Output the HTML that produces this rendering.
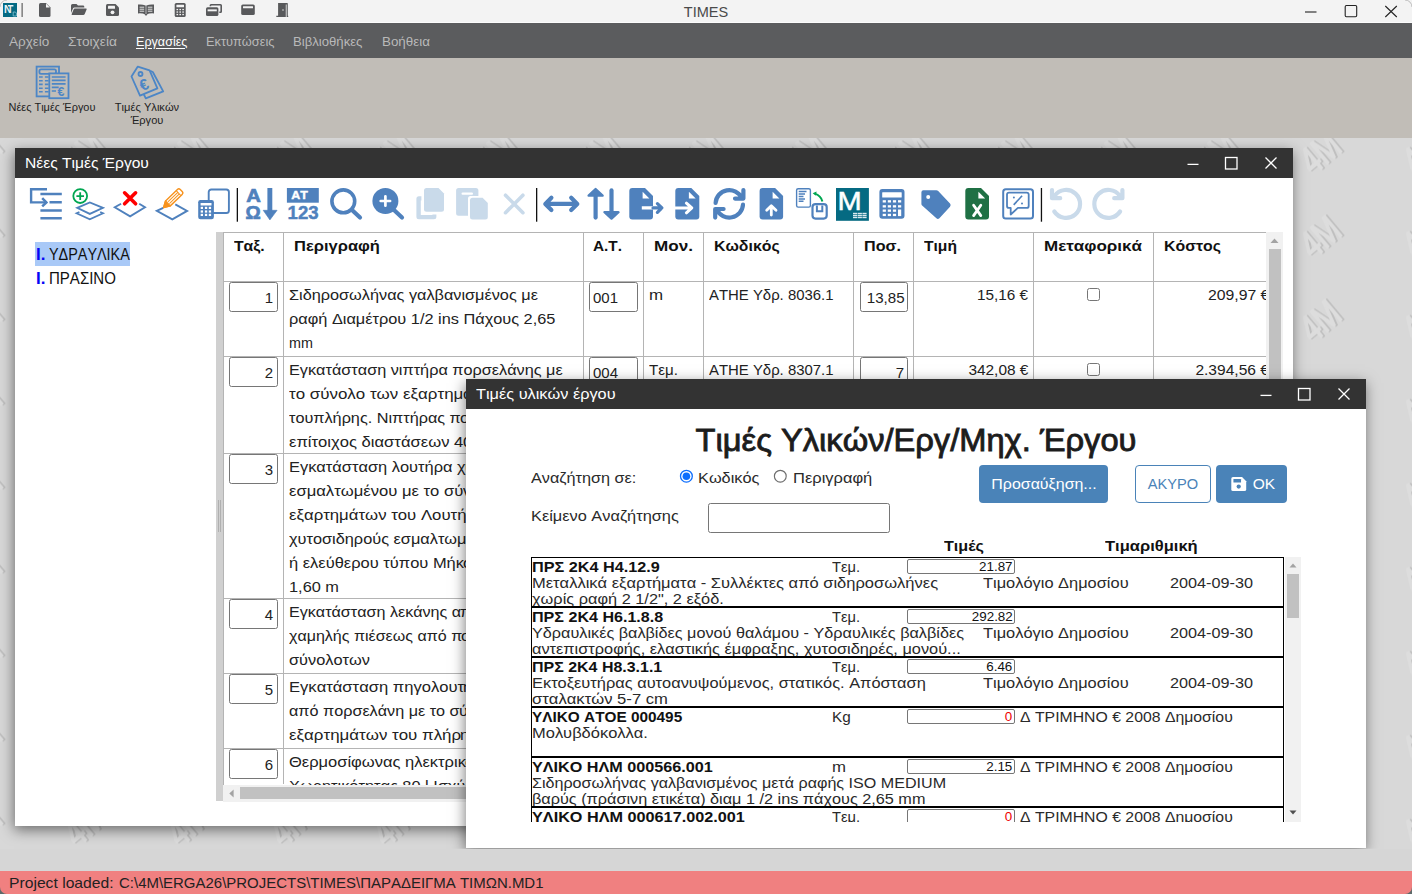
<!DOCTYPE html>
<html lang="el"><head><meta charset="utf-8"><title>TIMES</title>
<style>
html,body{margin:0;padding:0}
body{width:1412px;height:894px;overflow:hidden;position:relative;background:#d9d9d9;font-family:"Liberation Sans",sans-serif;font-kerning:none;color:#000}
.layer{position:absolute;left:0;top:0;width:1412px;height:894px;overflow:hidden}
.a{position:absolute;box-sizing:border-box}
.t{position:absolute;white-space:nowrap;font-kerning:none}
svg{position:absolute;overflow:visible}
</style></head><body>
<div class="layer" id="Lbase">
<div class="a" style="left:0px;top:0px;width:1412px;height:23px;background:#f3f3f3;"></div>
<div class="a" style="left:0px;top:22px;width:1412px;height:1px;background:#fbfbfb;"></div>
<div class="a" style="left:0px;top:23px;width:1412px;height:35px;background:#5b5c5e;"></div>
<div class="a" style="left:0px;top:58px;width:1412px;height:80px;background:#c1bdb7;"></div>
<svg style="left:0;top:138px" width="1412" height="711" viewBox="0 0 1412 711">
<defs><pattern id="wm" x="32" y="-27.6" width="103" height="84" patternUnits="userSpaceOnUse">
<g transform="translate(51.5,42) rotate(-40) scale(0.76,1)" font-family="Liberation Sans, sans-serif" font-size="38" font-weight="400" text-anchor="middle" stroke-linejoin="round">
<text x="2.2" y="14.8" fill="#bfbfbf" stroke="#bfbfbf" stroke-width="1.6">4M</text><text x="0" y="13.6" fill="#dddddd" stroke="#dddddd" stroke-width="1.6">4M</text></g>
</pattern></defs>
<rect width="1412" height="711" fill="#d8d8d8"/><rect width="1412" height="711" fill="url(#wm)"/></svg>
<div class="a" style="left:0px;top:848.8px;width:1412px;height:22.2px;background:#d6d6d6;"></div>
<div class="a" style="left:0px;top:871px;width:1412px;height:23px;background:#f08080;"></div>
<div class="t" id="t0" style="top:874.30px;font-size:15px;line-height:18px;color:#222;left:9.30px;transform:scaleX(1.0452);transform-origin:0 0;">Project loaded:</div>
<div class="t" id="t1" style="top:874.30px;font-size:15px;line-height:18px;color:#222;left:118.80px;transform:scaleX(0.9979);transform-origin:0 0;">C:\4M\ERGA26\PROJECTS\TIMES\ΠΑΡΑΔΕΙΓΜΑ ΤΙΜΩΝ.MD1</div>
<div class="t" id="t2" style="top:2.60px;font-size:15px;line-height:18px;color:#4a4a4a;left:406.00px;width:600px;text-align:center;transform:scaleX(0.9685);transform-origin:50% 0;">TIMES</div>
<div class="t" id="t3" style="top:33.50px;font-size:13px;line-height:16px;color:#b9b9b9;left:8.90px;transform:scaleX(1.0409);transform-origin:0 0;">Αρχείο</div>
<div class="t" id="t4" style="top:33.50px;font-size:13px;line-height:16px;color:#b9b9b9;left:67.90px;transform:scaleX(1.0559);transform-origin:0 0;">Στοιχεία</div>
<div class="t" id="t5" style="top:33.50px;font-size:13px;line-height:16px;color:#fff;left:136.00px;transform:scaleX(0.9687);transform-origin:0 0;text-decoration:underline;text-underline-offset:1.5px;">Εργασίες</div>
<div class="t" id="t6" style="top:33.50px;font-size:13px;line-height:16px;color:#b9b9b9;left:206.10px;transform:scaleX(0.9840);transform-origin:0 0;">Εκτυπώσεις</div>
<div class="t" id="t7" style="top:33.50px;font-size:13px;line-height:16px;color:#b9b9b9;left:293.40px;transform:scaleX(1.0104);transform-origin:0 0;">Βιβλιοθήκες</div>
<div class="t" id="t8" style="top:33.50px;font-size:13px;line-height:16px;color:#b9b9b9;left:381.90px;transform:scaleX(1.0287);transform-origin:0 0;">Βοήθεια</div>
<div class="t" id="t9" style="top:100.69px;font-size:11px;line-height:13px;color:#222;left:-247.80px;width:600px;text-align:center;transform:scaleX(0.9944);transform-origin:50% 0;">Νέες Τιμές Έργου</div>
<div class="t" id="t10" style="top:100.69px;font-size:11px;line-height:13px;color:#222;left:-152.80px;width:600px;text-align:center;transform:scaleX(1.0119);transform-origin:50% 0;">Τιμές Υλικών</div>
<div class="t" id="t11" style="top:114.29px;font-size:11px;line-height:13px;color:#222;left:-152.70px;width:600px;text-align:center;transform:scaleX(1.0052);transform-origin:50% 0;">Έργου</div>
<svg style="left:0;top:0" width="1412" height="894" viewBox="0 0 1412 894"><rect x="3" y="3" width="14" height="14" fill="#046a83"/><text x="4" y="12.6" font-family="Liberation Sans, sans-serif" font-size="10.5" font-weight="700" fill="#e8f4f7">N</text><rect x="8" y="5" width="5.4" height="1.5" fill="#e8f4f7"/><path d="M13.2 12 h2.2 l1 1 v3 h-3.2 z" fill="none" stroke="#9fd0dc" stroke-width="0.7"/><rect x="21.6" y="3" width="1" height="14" fill="#444"/><path d="M40.5 3 H46 L50.5 7.5 V15.5 Q50.5 17 49 17 H40.5 Q39 17 39 15.5 V4.5 Q39 3 40.5 3 Z" fill="#58595b"/><path d="M46 3.6 V7.5 H49.9 Z" fill="#f3f3f3"/><path d="M72.5 4 H76.5 L78 5.5 H83 Q84.3 5.5 84.3 6.8 V7.6 H74.5 Q73.4 7.6 73 8.6 L71 13 V5.5 Q71 4 72.5 4 Z" fill="#58595b"/><path d="M74.8 8.6 H86 Q87 8.6 86.6 9.6 L84.6 14.2 Q84.2 15 83.2 15 H72.2 Q71.3 15 71.7 14.1 L73.6 9.4 Q74 8.6 74.8 8.6 Z" fill="#58595b"/><path d="M107.5 4 H115.5 L119 7.5 V14.5 Q119 16 117.5 16 H107.5 Q106 16 106 14.5 V5.5 Q106 4 107.5 4 Z" fill="#58595b"/><rect x="108" y="5.8" width="7" height="3" fill="#f3f3f3" rx="0.4"/><circle cx="112.5" cy="12.3" r="1.9" fill="#f3f3f3"/><path d="M138 4.6 Q142 4 145.7 5.6 V14.4 Q142 13 138 13.4 Z M154 4.6 Q150 4 146.3 5.6 V14.4 Q150 13 154 13.4 Z" fill="#58595b"/><path d="M144.5 14 L146 16 L147.5 14 Z" fill="#58595b"/><g stroke="#f3f3f3" stroke-width="0.9"><path d="M139.6 7.2 H144.2 M139.6 9.2 H144.2 M139.6 11.2 H144.2 M147.8 7.2 H152.4 M147.8 9.2 H152.4 M147.8 11.2 H152.4"/></g><rect x="174.7" y="3" width="11" height="14" rx="1.6" fill="#58595b"/><rect x="176.4" y="4.7" width="7.6" height="2.6" fill="#f3f3f3" rx="0.4"/><rect x="176.5" y="8.9" width="1.6" height="1.3" fill="#f3f3f3"/><rect x="179.4" y="8.9" width="1.6" height="1.3" fill="#f3f3f3"/><rect x="182.3" y="8.9" width="1.6" height="1.3" fill="#f3f3f3"/><rect x="176.5" y="11.4" width="1.6" height="1.3" fill="#f3f3f3"/><rect x="179.4" y="11.4" width="1.6" height="1.3" fill="#f3f3f3"/><rect x="182.3" y="11.4" width="1.6" height="1.3" fill="#f3f3f3"/><rect x="176.5" y="13.9" width="1.6" height="1.3" fill="#f3f3f3"/><rect x="179.4" y="13.9" width="1.6" height="1.3" fill="#f3f3f3"/><rect x="182.3" y="13.9" width="1.6" height="1.3" fill="#f3f3f3"/><path d="M211 4 H220.5 Q222 4 222 5.5 V11.5 Q222 13 220.5 13 H219.3 V11.5 H220.4 V5.6 H211.2 V6.2 H209.6 V5.5 Q209.6 4 211 4 Z" fill="#58595b"/><rect x="206" y="7.2" width="12.4" height="8.8" rx="1.5" fill="#58595b"/><rect x="207.6" y="9.4" width="9.2" height="1.9" fill="#f3f3f3"/><rect x="241.2" y="4.5" width="13.6" height="10.5" rx="1.6" fill="#58595b"/><rect x="243" y="6.3" width="10" height="2" fill="#f3f3f3" rx="0.3"/><path d="M278.3 3 H284.6 V15.8 H276.3 V17 H285.8 V4.4 H286.6 V17 H288.2 V15.8 H287.8 V3.6 Q287.8 3 287.2 3 H285.2 Z M278.3 3 V15.8 H284.6 V3 Z" fill="#58595b"/><rect x="278.3" y="3" width="6.5" height="13" fill="#58595b"/><circle cx="283" cy="10" r="0.7" fill="#f3f3f3"/><g stroke="#222" stroke-width="1.1" fill="none"><path d="M1305 12 H1316.5"/><rect x="1345.2" y="5.5" width="11.5" height="11.2" rx="1.2"/><path d="M1385.3 6 L1396.8 17 M1396.8 6 L1385.3 17"/></g><path d="M1412 887 V894 H1405 A7 7 0 0 0 1412 887 Z" fill="#5d6a6a"/><path d="M0 887 V894 H7 A7 7 0 0 1 0 887 Z" fill="#5d6a6a"/><path d="M0 7 A7 7 0 0 1 7 0" fill="none" stroke="#bdbdbd" stroke-width="1"/><path d="M1412 7 A7 7 0 0 0 1405 0" fill="none" stroke="#bdbdbd" stroke-width="1"/></svg>
<svg style="left:0;top:0" width="1412" height="894" viewBox="0 0 1412 894"><g fill="none" stroke="#4c86c6" stroke-width="1.8"><rect x="36.6" y="66.6" width="22.4" height="29.8"/><rect x="39.4" y="69.4" width="16.6" height="4.4" rx="1.6"/><path d="M39 77 H42.7 M44.9 77 H48.6 M39 80.7 H42.7 M44.9 80.7 H48.6 M39 84.4 H42.7 M44.9 84.4 H48.6 M39 88.2 H42.7 M44.9 88.2 H48.6 M39 91.7 H42.7 M44.9 91.7 H48.6 " stroke-width="1.6"/><rect x="49.3" y="73.4" width="19.2" height="24.8" fill="#c1bdb7"/><path d="M51.8 77 H65.6 M51.8 80.4 H65.6 M51.8 83.9 H65.6 M51.8 87.4 H58.7 M51.8 91 H56" stroke-width="1.6"/></g><text x="57.6" y="96" font-family="Liberation Sans, sans-serif" font-size="12.5" font-weight="700" fill="#4c86c6">€</text><g fill="none" stroke="#4c86c6" stroke-width="1.8" stroke-linejoin="round"><path d="M150.2 70.9 L152.8 72 L163.2 91.4 L145.8 98.4 L143.6 94"/><path d="M137.8 66.6 L131.5 76.5 L140 95.6 L157.4 88.4 L149.6 70.4 Z" fill="#c1bdb7"/><circle cx="140.5" cy="74" r="2"/></g><text x="0" y="0" transform="translate(142.2,91.2) rotate(-24)" font-family="Liberation Sans, sans-serif" font-size="15.5" font-weight="700" fill="#4c86c6">€</text></svg>
</div>
<div class="layer" id="Lw1" style="clip-path:inset(138px 0 45.2px 0)">
<div class="a" style="left:15px;top:148px;width:1278px;height:678px;background:#fff;box-shadow:-1px 4px 13px rgba(0,0,0,0.5);"></div>
<div class="a" style="left:15px;top:148px;width:1278px;height:30px;background:#333;"></div>
<div class="t" id="t12" style="top:153.80px;font-size:15px;line-height:18px;color:#fff;left:24.80px;transform:scaleX(1.0397);transform-origin:0 0;">Νέες Τιμές Έργου</div>
<svg style="left:0;top:0" width="1412" height="894" viewBox="0 0 1412 894"><g stroke="#fff" stroke-width="1.3" fill="none"><path d="M1187.5 164.4 H1198.5"/><rect x="1225.5" y="157.5" width="11.5" height="11.5"/><path d="M1265.5 157.5 L1276.5 168.5 M1276.5 157.5 L1265.5 168.5"/></g></svg>
<svg style="left:0;top:0" width="1412" height="894" viewBox="0 0 1412 894"><rect x="236.70000000000002" y="188" width="1.3" height="33.7" fill="#111"/><rect x="536.0" y="188" width="1.3" height="33.7" fill="#111"/><rect x="1040.8000000000002" y="188" width="1.3" height="33.7" fill="#111"/><g transform="translate(30,188)" fill="none" stroke="#4f81bd"><path d="M17 1.2 H1.1 V14.4 H16" stroke-width="2.4"/><path d="M12.2 10.2 L16.4 14.4 L12.2 18.4" stroke-width="2.5"/><path d="M10.4 6 H31.8 M19.5 14.3 H31.8 M10.4 22.5 H31.8 M10.4 30.3 H31.8" stroke-width="2.6"/></g><g transform="translate(72,188)" fill="none"><path d="M5.2 19.9 L17.8 14.5 L31 19.9 L17.8 25.9 Z M7.4 24 L4.6 25.3 L17.8 31.3 L31 25.3 L28.2 24" stroke="#4f81bd" stroke-width="1.8" stroke-linejoin="miter"/><circle cx="8.2" cy="8.1" r="6.9" fill="#fff" stroke="#00a651" stroke-width="1.8"/><path d="M4.4 8.1 H12 M8.2 4.3 V11.9" stroke="#00a651" stroke-width="1.8"/></g><g transform="translate(114,188)" fill="none"><path d="M7.1 15.7 L0.8 19.3 L16.1 28.3 L31 19.3 L25.2 15.7" stroke="#4f81bd" stroke-width="1.9"/><path d="M10.6 4.8 L21.6 15.8 M21.6 4.8 L10.6 15.8" stroke="#ff0000" stroke-width="3.6" stroke-linecap="round"/></g><g transform="translate(156,188)" fill="none"><path d="M7.2 19.9 L0.8 22.9 L16.3 31.3 L31.1 22.9 L19.3 16.3" stroke="#4f81bd" stroke-width="1.9"/><g transform="translate(7.6,19.6) rotate(-44)" stroke="#f7931e" stroke-width="1.4" stroke-linejoin="round"><path d="M0 0 L6 -3.4 H22.5 Q24.5 -3.4 24.5 -1.4 V1.4 Q24.5 3.4 22.5 3.4 H6 Z" fill="#fff"/><path d="M0 0 L6 -3.4 V3.4 Z" fill="#f7931e"/><path d="M7 -1.1 H20.5 M7 1.1 H20.5 M20.8 -3.4 V3.4" stroke-width="1"/></g></g><g transform="translate(198,188)"><rect x="10.7" y="1.5" width="20.2" height="23.5" rx="2.6" fill="none" stroke="#4f81bd" stroke-width="1.9"/><rect x="0.2" y="12.1" width="15.7" height="19.2" rx="2.2" fill="#4f81bd"/><rect x="2.6" y="15" width="10.9" height="2.6" fill="#fff" rx="0.4"/><rect x="2.7" y="18.8" width="2.3" height="2.2" fill="#fff"/><rect x="6.9" y="18.8" width="2.3" height="2.2" fill="#fff"/><rect x="10.8" y="18.8" width="2.3" height="2.2" fill="#fff"/><rect x="2.7" y="22.4" width="2.3" height="2.2" fill="#fff"/><rect x="6.9" y="22.4" width="2.3" height="2.2" fill="#fff"/><rect x="10.8" y="22.4" width="2.3" height="2.2" fill="#fff"/><rect x="2.7" y="25.8" width="2.3" height="2.2" fill="#fff"/><rect x="6.9" y="25.8" width="2.3" height="2.2" fill="#fff"/><rect x="10.8" y="25.8" width="2.3" height="2.2" fill="#fff"/></g><g transform="translate(244,188)" fill="#4f81bd"><text x="2.2" y="13.7" font-family="Liberation Sans, sans-serif" font-size="18.6" font-weight="700" stroke="#4f81bd" stroke-width="0.7" textLength="14.6" lengthAdjust="spacingAndGlyphs">A</text><text x="1.4" y="31.1" font-family="Liberation Sans, sans-serif" font-size="18.4" font-weight="700" stroke="#4f81bd" stroke-width="0.7" textLength="15.2" lengthAdjust="spacingAndGlyphs">Ω</text><rect x="23.4" y="0" width="4.9" height="23.5"/><path d="M19.2 22.3 H33.1 L25.9 31.9 Z" stroke="#4f81bd" stroke-width="0.6" stroke-linejoin="round"/></g><g transform="translate(286,188)"><rect x="0.9" y="0" width="31.9" height="14.7" fill="#4f81bd"/><text x="5.3" y="10.9" font-family="Liberation Sans, sans-serif" font-size="11.8" font-weight="700" fill="#fff" stroke="#fff" stroke-width="0.4" textLength="16.6" lengthAdjust="spacingAndGlyphs">AT</text><text x="1.6" y="31.1" font-family="Liberation Sans, sans-serif" font-size="18.6" font-weight="700" fill="#4f81bd" stroke="#4f81bd" stroke-width="0.45" textLength="31" lengthAdjust="spacingAndGlyphs">123</text></g><g transform="translate(328,188)" fill="none" stroke="#4f81bd" stroke-linecap="round"><circle cx="15.3" cy="13.3" r="11.4" stroke-width="3.6"/><path d="M24 22 L32 29.6" stroke-width="4.2"/></g><g transform="translate(370,188)" stroke-linecap="round"><circle cx="15.4" cy="13" r="13" fill="#4f81bd"/><path d="M24 22 L32 29.6" stroke="#4f81bd" stroke-width="4.2"/><path d="M10.7 13 H20.1 M15.4 8.3 V17.7" stroke="#fff" stroke-width="2.7"/></g><g transform="translate(412,188)" fill="#c9daea"><path d="M14.5 0 H26.5 L32 5.5 V21.3 Q32 23.8 29.5 23.8 H14.5 Q12 23.8 12 21.3 V2.5 Q12 0 14.5 0 Z"/><path d="M6.9 8.3 H9.4 V12.4 H8.8 V27 H20.4 V26.4 H24.4 V28.8 Q24.4 31.3 21.9 31.3 H6.9 Q4.4 31.3 4.4 28.8 V10.8 Q4.4 8.3 6.9 8.3 Z"/></g><g transform="translate(454,188)" fill="#c9daea"><path d="M4.6 0 H21.9 Q24.4 0 24.4 2.5 V8 H16.5 Q14 8 14 10.5 V27.7 H4.6 Q2.1 27.7 2.1 25.2 V2.5 Q2.1 0 4.6 0 Z"/><rect x="7.5" y="4.6" width="11.5" height="2.2" rx="1.1" fill="#fff"/><path d="M18.5 9.8 H28.6 L33.8 15 V29 Q33.8 31.5 31.3 31.5 H18.5 Q16 31.5 16 29 V12.3 Q16 9.8 18.5 9.8 Z"/></g><path d="M505.5 195.2 L522.9 212.7 M522.9 195.2 L505.5 212.7" stroke="#c9daea" stroke-width="3.6" stroke-linecap="round" fill="none"/><g fill="none" stroke="#4f81bd" stroke-width="4.2" stroke-linecap="round" stroke-linejoin="round"><path d="M545.5 203.9 H577.1 M551.4 197.8 L545.3 203.9 L551.4 210 M571.2 197.8 L577.3 203.9 L571.2 210"/></g><g fill="#4f81bd" stroke="#4f81bd" stroke-linejoin="round" stroke-linecap="round"><path d="M595.6 196 V217.6" stroke-width="4.2" fill="none"/><path d="M588.6 195.6 L595.6 189 L602.6 195.6 Z" stroke-width="2.4"/><path d="M611.5 190.4 V212" stroke-width="4.2" fill="none"/><path d="M604.5 212.2 L611.5 218.6 L618.5 212.2 Z" stroke-width="2.4"/></g><path d="M632.3 188 H645 L653 196 V216.6 Q653 219.6 650 219.6 H632.3 Q629.3 219.6 629.3 216.6 V191 Q629.3 188 632.3 188 Z" fill="#4f81bd"/><path d="M642.6 191.8 V198.4 H649.4 Z" fill="#fff"/><path d="M641.8 207.9 H653" stroke="#fff" stroke-width="3.2" fill="none"/><path d="M653 207.9 H661.6 M657.4 203.6 L661.9 207.9 L657.4 212.4" stroke="#4f81bd" stroke-width="3.2" fill="none" stroke-linecap="round" stroke-linejoin="round"/><path d="M678.3 188 H691.3 L699.3 196 V216.6 Q699.3 219.6 696.3 219.6 H678.3 Q675.3 219.6 675.3 216.6 V191 Q675.3 188 678.3 188 Z" fill="#4f81bd"/><path d="M688.9 191.8 V198.4 H695.7 Z" fill="#fff"/><path d="M675 207.9 H691.4 M686.4 203.2 L691.8 207.9 L686.4 212.8" stroke="#fff" stroke-width="3" fill="none" stroke-linecap="round" stroke-linejoin="round"/><g fill="none" stroke="#4f81bd" stroke-width="4.2" stroke-linecap="round" stroke-linejoin="round"><path d="M715.6 203 A13.7 13.7 0 0 1 741.7 198 M743.4 190 V198.6 H735"/><path d="M743 204.6 A13.7 13.7 0 0 1 716.9 209.6 M715.2 217.6 V209 H723.6"/></g><path d="M762.6 188 H775.1 L783.1 196 V216.6 Q783.1 219.6 780.1 219.6 H762.6 Q759.6 219.6 759.6 216.6 V191 Q759.6 188 762.6 188 Z" fill="#4f81bd"/><path d="M772.6 191.8 V198.4 H779.4 Z" fill="#fff"/><path d="M771.3 215 V206 M766.7 210.3 L771.3 205.7 L776 210.3" stroke="#fff" stroke-width="2.8" fill="none" stroke-linecap="round" stroke-linejoin="round"/><rect x="796.6" y="188.7" width="13.8" height="18.4" rx="1.6" fill="#fff" stroke="#4f81bd" stroke-width="1.4"/><path d="M798.7 191.6 H806.5 M798.7 194 H805 M798.7 196.4 H803.5 M798.7 198.9 H805 M798.7 201.3 H803.5" stroke="#4f81bd" stroke-width="1.5" fill="none"/><path d="M822.4 201.4 Q821 195.5 814.6 193.6" stroke="#00a651" stroke-width="2" fill="none"/><path d="M812.6 193.2 L816.6 191.4 L816 195.8 Z" fill="#00a651"/><rect x="812.5" y="204.1" width="14.2" height="14.5" rx="3" fill="#fff" stroke="#4f81bd" stroke-width="2.2"/><path d="M816.9 205.4 V211.3 H822.3 V205.4" stroke="#4f81bd" stroke-width="2" fill="none"/><rect x="836" y="188" width="32.9" height="32.8" fill="#056a82"/><text x="837.6" y="209.7" font-family="Liberation Sans, sans-serif" font-size="26" fill="#fff" stroke="#fff" stroke-width="0.5" textLength="24.2" lengthAdjust="spacingAndGlyphs">M</text><g fill="#d9e9ee"><rect x="853.0" y="212.8" width="4.2" height="1.4"/><rect x="857.7" y="212.8" width="4.2" height="1.4"/><rect x="862.4" y="212.8" width="4.2" height="1.4"/><rect x="853.0" y="214.8" width="4.2" height="1.4"/><rect x="857.7" y="214.8" width="4.2" height="1.4"/><rect x="862.4" y="214.8" width="4.2" height="1.4"/><rect x="853.0" y="216.8" width="4.2" height="1.4"/><rect x="857.7" y="216.8" width="4.2" height="1.4"/><rect x="862.4" y="216.8" width="4.2" height="1.4"/></g><rect x="879.4" y="189" width="25.1" height="29.7" rx="3" fill="#4f81bd"/><rect x="882.2" y="192.2" width="19.5" height="5.2" fill="#fff" rx="0.5"/><rect x="882.7" y="200.2" width="3.2" height="2.3" fill="#fff"/><rect x="887.8" y="200.2" width="3.2" height="2.3" fill="#fff"/><rect x="892.9" y="200.2" width="3.2" height="2.3" fill="#fff"/><rect x="898.0" y="200.2" width="3.2" height="2.3" fill="#fff"/><rect x="882.7" y="205.2" width="3.2" height="2.3" fill="#fff"/><rect x="887.8" y="205.2" width="3.2" height="2.3" fill="#fff"/><rect x="892.9" y="205.2" width="3.2" height="2.3" fill="#fff"/><rect x="898.0" y="205.2" width="3.2" height="2.3" fill="#fff"/><rect x="882.7" y="209.5" width="3.2" height="2.3" fill="#fff"/><rect x="887.8" y="209.5" width="3.2" height="2.3" fill="#fff"/><rect x="892.9" y="209.5" width="3.2" height="2.3" fill="#fff"/><rect x="898.0" y="209.5" width="3.2" height="6.6" fill="#fff"/><rect x="882.7" y="213.8" width="3.2" height="2.3" fill="#fff"/><rect x="887.8" y="213.8" width="3.2" height="2.3" fill="#fff"/><rect x="892.9" y="213.8" width="3.2" height="2.3" fill="#fff"/><path d="M923.4 190.2 H936.4 Q937.4 190.2 938.2 191 L950 203.6 Q951.4 205.2 950 206.8 L939.4 218.2 Q937.9 219.7 936.4 218.3 L922.4 205.8 Q921.4 205 921.4 204 V192.2 Q921.4 190.2 923.4 190.2 Z" fill="#4f81bd"/><circle cx="928.2" cy="197" r="2" fill="#fff"/><path d="M968.3 188 H981 L989 196 V216.6 Q989 219.6 986 219.6 H968.3 Q965.3 219.6 965.3 216.6 V191 Q965.3 188 968.3 188 Z" fill="#1f7044"/><path d="M978.4 191.8 V198.4 H985.2 Z" fill="#fff"/><path d="M973.6 205.2 L980.8 215.6 M980.8 205.2 L973.6 215.6" stroke="#fff" stroke-width="2.8" fill="none" stroke-linecap="round"/><g fill="none" stroke="#4f81bd"><rect x="1003.2" y="189.3" width="29.8" height="29.3" rx="2.6" stroke-width="2"/><path d="M1009 192.6 H1026.7 Q1028.7 192.6 1028.7 194.6 V205.9 Q1028.7 207.9 1026.7 207.9 H1017.9 L1010.7 214.5 V207.9 H1009 Q1007 207.9 1007 205.9 V194.6 Q1007 192.6 1009 192.6 Z" stroke-width="1.8" stroke-linejoin="round"/><path d="M1013.7 204.9 L1022.1 195.8" stroke-width="1.6"/></g><circle cx="1013.9" cy="197.4" r="1" fill="#4f81bd"/><circle cx="1022" cy="203.6" r="1" fill="#4f81bd"/><g fill="none" stroke="#c9daea" stroke-width="4.2" stroke-linecap="round" stroke-linejoin="round"><path d="M1054.6 195.9 A14 14 0 1 1 1054.3 211.5 M1052 190 V198.2 H1060.2"/><path d="M1119.8 195.9 A14 14 0 1 0 1120.1 211.5 M1122.4 190 V198.2 H1114.2"/></g></svg>
<div class="a" style="left:35px;top:242px;width:95px;height:24px;background:#a9c9f7;"></div>
<div class="t" id="t13" style="top:244.89px;font-size:15.6px;line-height:19px;font-weight:700;color:#0505f5;left:35.50px;transform:scaleX(1.0840);transform-origin:0 0;">I.</div>
<div class="t" id="t14" style="top:244.89px;font-size:15.6px;line-height:19px;color:#111;left:49.10px;transform:scaleX(0.9226);transform-origin:0 0;">ΥΔΡΑΥΛΙΚΑ</div>
<div class="t" id="t15" style="top:269.29px;font-size:15.6px;line-height:19px;font-weight:700;color:#0505f5;left:35.50px;transform:scaleX(1.0840);transform-origin:0 0;">I.</div>
<div class="t" id="t16" style="top:269.29px;font-size:15.6px;line-height:19px;color:#111;left:49.10px;transform:scaleX(0.9635);transform-origin:0 0;">ΠΡΑΣΙΝΟ</div>
<div class="a" style="left:216px;top:232px;width:7.5px;height:569px;background:#d0d0d0;"></div>
<div class="a" style="left:217.5px;top:500px;width:1px;height:32px;background:#b0b0b0;"></div>
<div class="a" style="left:219.5px;top:500px;width:1px;height:32px;background:#b0b0b0;"></div>
<div class="a" style="left:223px;top:232px;width:1043px;height:1px;background:#b4b4b4;"></div>
<div class="a" style="left:223px;top:232.5px;width:1px;height:552px;background:#b4b4b4;"></div>
<div class="a" style="left:283px;top:233px;width:1px;height:551px;background:#b4b4b4;"></div>
<div class="a" style="left:583px;top:233px;width:1px;height:551px;background:#b4b4b4;"></div>
<div class="a" style="left:643px;top:233px;width:1px;height:551px;background:#b4b4b4;"></div>
<div class="a" style="left:703px;top:233px;width:1px;height:551px;background:#b4b4b4;"></div>
<div class="a" style="left:853px;top:233px;width:1px;height:551px;background:#b4b4b4;"></div>
<div class="a" style="left:913px;top:233px;width:1px;height:551px;background:#b4b4b4;"></div>
<div class="a" style="left:1033px;top:233px;width:1px;height:551px;background:#b4b4b4;"></div>
<div class="a" style="left:1153px;top:233px;width:1px;height:551px;background:#b4b4b4;"></div>
<div class="a" style="left:223px;top:280.5px;width:1043px;height:1px;background:#b4b4b4;"></div>
<div class="a" style="left:223px;top:355.5px;width:1043px;height:1px;background:#b4b4b4;"></div>
<div class="a" style="left:223px;top:452.5px;width:1043px;height:1px;background:#b4b4b4;"></div>
<div class="a" style="left:223px;top:597.5px;width:1043px;height:1px;background:#b4b4b4;"></div>
<div class="a" style="left:223px;top:672.5px;width:1043px;height:1px;background:#b4b4b4;"></div>
<div class="a" style="left:223px;top:747.5px;width:1043px;height:1px;background:#b4b4b4;"></div>
<div class="t" id="t17" style="top:236.80px;font-size:15px;line-height:18px;font-weight:700;color:#111;left:234.30px;transform:scaleX(1.0501);transform-origin:0 0;">Ταξ.</div>
<div class="t" id="t18" style="top:236.80px;font-size:15px;line-height:18px;font-weight:700;color:#111;left:294.30px;transform:scaleX(1.0993);transform-origin:0 0;">Περιγραφή</div>
<div class="t" id="t19" style="top:236.80px;font-size:15px;line-height:18px;font-weight:700;color:#111;left:593.40px;transform:scaleX(1.0232);transform-origin:0 0;">Α.Τ.</div>
<div class="t" id="t20" style="top:236.80px;font-size:15px;line-height:18px;font-weight:700;color:#111;left:654.10px;transform:scaleX(1.1384);transform-origin:0 0;">Μον.</div>
<div class="t" id="t21" style="top:236.80px;font-size:15px;line-height:18px;font-weight:700;color:#111;left:714.00px;transform:scaleX(1.0578);transform-origin:0 0;">Κωδικός</div>
<div class="t" id="t22" style="top:236.80px;font-size:15px;line-height:18px;font-weight:700;color:#111;left:863.70px;transform:scaleX(1.0744);transform-origin:0 0;">Ποσ.</div>
<div class="t" id="t23" style="top:236.80px;font-size:15px;line-height:18px;font-weight:700;color:#111;left:924.10px;transform:scaleX(1.0388);transform-origin:0 0;">Τιμή</div>
<div class="t" id="t24" style="top:236.80px;font-size:15px;line-height:18px;font-weight:700;color:#111;left:1043.90px;transform:scaleX(1.1334);transform-origin:0 0;">Μεταφορικά</div>
<div class="t" id="t25" style="top:236.80px;font-size:15px;line-height:18px;font-weight:700;color:#111;left:1163.70px;transform:scaleX(1.0571);transform-origin:0 0;">Κόστος</div>
<div class="a" style="left:229px;top:282px;width:49px;height:29.5px;background:#fff;border:1px solid #767676;border-radius:2.5px;"></div>
<div class="t" id="t26" style="top:288.80px;font-size:15px;line-height:18px;color:#222;right:1138.80px;">1</div>
<div class="t" id="t27" style="top:286.10px;font-size:15px;line-height:18px;color:#222;left:288.80px;transform:scaleX(1.0845);transform-origin:0 0;">Σιδηροσωλήνας γαλβανισμένος με</div>
<div class="t" id="t28" style="top:310.10px;font-size:15px;line-height:18px;color:#222;left:288.80px;transform:scaleX(1.0880);transform-origin:0 0;">ραφή Διαμέτρου 1/2 ins Πάχους 2,65</div>
<div class="t" id="t29" style="top:334.10px;font-size:15px;line-height:18px;color:#222;left:288.80px;transform:scaleX(0.9560);transform-origin:0 0;">mm</div>
<div class="a" style="left:589px;top:282px;width:49px;height:29.5px;background:#fff;border:1px solid #767676;border-radius:2.5px;"></div>
<div class="t" id="t30" style="top:288.80px;font-size:15px;line-height:18px;color:#222;left:592.70px;transform:scaleX(0.9988);transform-origin:0 0;">001</div>
<div class="t" id="t31" style="top:286.10px;font-size:15px;line-height:18px;color:#222;left:648.80px;transform:scaleX(1.1280);transform-origin:0 0;">m</div>
<div class="t" id="t32" style="top:286.10px;font-size:15px;line-height:18px;color:#222;left:708.70px;transform:scaleX(0.9938);transform-origin:0 0;">ΑΤΗΕ Υδρ. 8036.1</div>
<div class="a" style="left:859.5px;top:282px;width:48.5px;height:29.5px;background:#fff;border:1px solid #767676;border-radius:2.5px;"></div>
<div class="t" id="t33" style="top:288.80px;font-size:15px;line-height:18px;color:#222;right:507.90px;transform:scaleX(1.0067);transform-origin:100% 0;">13,85</div>
<div class="t" id="t34" style="top:286.10px;font-size:15px;line-height:18px;color:#222;right:383.70px;transform:scaleX(1.0210);transform-origin:100% 0;">15,16 €</div>
<div class="a" style="left:1087px;top:287.5px;width:13px;height:13px;background:#fff;border:1px solid #767676;border-radius:2.5px;"></div>
<div class="t" id="t35" style="top:286.10px;font-size:15px;line-height:18px;color:#222;right:142.80px;transform:scaleX(1.0515);transform-origin:100% 0;">209,97 €</div>
<div class="a" style="left:229px;top:357px;width:49px;height:29.5px;background:#fff;border:1px solid #767676;border-radius:2.5px;"></div>
<div class="t" id="t36" style="top:363.80px;font-size:15px;line-height:18px;color:#222;right:1138.80px;">2</div>
<div class="t" id="t37" style="top:361.10px;font-size:15px;line-height:18px;color:#222;left:288.80px;transform:scaleX(1.0834);transform-origin:0 0;">Εγκατάσταση νιπτήρα πορσελάνης με</div>
<div class="t" id="t38" style="top:385.10px;font-size:15px;line-height:18px;color:#222;left:288.80px;transform:scaleX(1.1276);transform-origin:0 0;">το σύνολο των εξαρτημ</div>
<div class="t" id="t39" style="top:385.10px;font-size:15px;line-height:18px;color:#222;left:462.50px;transform:scaleX(1.0900);transform-origin:0 0;">άτων του</div>
<div class="t" id="t40" style="top:409.10px;font-size:15px;line-height:18px;color:#222;left:288.80px;transform:scaleX(1.0816);transform-origin:0 0;">τουπλήρης. Νιπτήρας π</div>
<div class="t" id="t41" style="top:409.10px;font-size:15px;line-height:18px;color:#222;left:460.00px;transform:scaleX(1.0900);transform-origin:0 0;">ορσελάνης</div>
<div class="t" id="t42" style="top:433.10px;font-size:15px;line-height:18px;color:#222;left:288.80px;transform:scaleX(1.1069);transform-origin:0 0;">επίτοιχος διαστάσεων 4</div>
<div class="t" id="t43" style="top:433.10px;font-size:15px;line-height:18px;color:#222;left:462.50px;transform:scaleX(1.0900);transform-origin:0 0;">0 Χ 50 cm</div>
<div class="a" style="left:589px;top:357px;width:49px;height:29.5px;background:#fff;border:1px solid #767676;border-radius:2.5px;"></div>
<div class="t" id="t44" style="top:363.80px;font-size:15px;line-height:18px;color:#222;left:592.70px;transform:scaleX(0.9988);transform-origin:0 0;">004</div>
<div class="t" id="t45" style="top:361.10px;font-size:15px;line-height:18px;color:#222;left:648.80px;transform:scaleX(1.0080);transform-origin:0 0;">Τεμ.</div>
<div class="t" id="t46" style="top:361.10px;font-size:15px;line-height:18px;color:#222;left:708.70px;transform:scaleX(0.9938);transform-origin:0 0;">ΑΤΗΕ Υδρ. 8307.1</div>
<div class="a" style="left:859.5px;top:357px;width:48.5px;height:29.5px;background:#fff;border:1px solid #767676;border-radius:2.5px;"></div>
<div class="t" id="t47" style="top:363.80px;font-size:15px;line-height:18px;color:#222;right:507.90px;">7</div>
<div class="t" id="t48" style="top:361.10px;font-size:15px;line-height:18px;color:#222;right:383.70px;transform:scaleX(1.0276);transform-origin:100% 0;">342,08 €</div>
<div class="a" style="left:1087px;top:362.5px;width:13px;height:13px;background:#fff;border:1px solid #767676;border-radius:2.5px;"></div>
<div class="t" id="t49" style="top:361.10px;font-size:15px;line-height:18px;color:#222;right:142.80px;transform:scaleX(1.0366);transform-origin:100% 0;">2.394,56 €</div>
<div class="a" style="left:229px;top:454px;width:49px;height:29.5px;background:#fff;border:1px solid #767676;border-radius:2.5px;"></div>
<div class="t" id="t50" style="top:460.80px;font-size:15px;line-height:18px;color:#222;right:1138.80px;">3</div>
<div class="t" id="t51" style="top:458.10px;font-size:15px;line-height:18px;color:#222;left:288.80px;transform:scaleX(1.0943);transform-origin:0 0;">Εγκατάσταση λουτήρα χ</div>
<div class="t" id="t52" style="top:458.10px;font-size:15px;line-height:18px;color:#222;left:464.90px;transform:scaleX(1.0900);transform-origin:0 0;">υτοσιδηρού</div>
<div class="t" id="t53" style="top:482.10px;font-size:15px;line-height:18px;color:#222;left:288.80px;transform:scaleX(1.1078);transform-origin:0 0;">εσμαλτωμένου με το σύ</div>
<div class="t" id="t54" style="top:482.10px;font-size:15px;line-height:18px;color:#222;left:462.50px;transform:scaleX(1.0900);transform-origin:0 0;">νολο των</div>
<div class="t" id="t55" style="top:506.10px;font-size:15px;line-height:18px;color:#222;left:288.80px;transform:scaleX(1.1166);transform-origin:0 0;">εξαρτημάτων του Λουτή</div>
<div class="t" id="t56" style="top:506.10px;font-size:15px;line-height:18px;color:#222;left:465.70px;transform:scaleX(1.0900);transform-origin:0 0;">ρας</div>
<div class="t" id="t57" style="top:530.10px;font-size:15px;line-height:18px;color:#222;left:288.80px;transform:scaleX(1.0880);transform-origin:0 0;">χυτοσιδηρούς εσμαλτωμ</div>
<div class="t" id="t58" style="top:530.10px;font-size:15px;line-height:18px;color:#222;left:465.70px;transform:scaleX(1.0900);transform-origin:0 0;">ένος πλήρης</div>
<div class="t" id="t59" style="top:554.10px;font-size:15px;line-height:18px;color:#222;left:288.80px;transform:scaleX(1.0979);transform-origin:0 0;">ή ελεύθερου τύπου Μήκ</div>
<div class="t" id="t60" style="top:554.10px;font-size:15px;line-height:18px;color:#222;left:463.20px;transform:scaleX(1.0900);transform-origin:0 0;">ους περίπου</div>
<div class="t" id="t61" style="top:578.10px;font-size:15px;line-height:18px;color:#222;left:288.80px;transform:scaleX(1.0900);transform-origin:0 0;">1,60 m</div>
<div class="a" style="left:589px;top:454px;width:49px;height:29.5px;background:#fff;border:1px solid #767676;border-radius:2.5px;"></div>
<div class="t" id="t62" style="top:460.80px;font-size:15px;line-height:18px;color:#222;left:592.70px;transform:scaleX(0.9988);transform-origin:0 0;">005</div>
<div class="t" id="t63" style="top:458.10px;font-size:15px;line-height:18px;color:#222;left:648.80px;transform:scaleX(1.0080);transform-origin:0 0;">Τεμ.</div>
<div class="t" id="t64" style="top:458.10px;font-size:15px;line-height:18px;color:#222;left:708.70px;transform:scaleX(0.9938);transform-origin:0 0;">ΑΤΗΕ Υδρ. 8312.1</div>
<div class="a" style="left:859.5px;top:454px;width:48.5px;height:29.5px;background:#fff;border:1px solid #767676;border-radius:2.5px;"></div>
<div class="t" id="t65" style="top:460.80px;font-size:15px;line-height:18px;color:#222;right:507.90px;">3</div>
<div class="t" id="t66" style="top:458.10px;font-size:15px;line-height:18px;color:#222;right:383.70px;transform:scaleX(1.0276);transform-origin:100% 0;">412,50 €</div>
<div class="a" style="left:1087px;top:459.5px;width:13px;height:13px;background:#fff;border:1px solid #767676;border-radius:2.5px;"></div>
<div class="t" id="t67" style="top:458.10px;font-size:15px;line-height:18px;color:#222;right:142.80px;transform:scaleX(1.0366);transform-origin:100% 0;">1.237,50 €</div>
<div class="a" style="left:229px;top:599px;width:49px;height:29.5px;background:#fff;border:1px solid #767676;border-radius:2.5px;"></div>
<div class="t" id="t68" style="top:605.80px;font-size:15px;line-height:18px;color:#222;right:1138.80px;">4</div>
<div class="t" id="t69" style="top:603.10px;font-size:15px;line-height:18px;color:#222;left:288.80px;transform:scaleX(1.0745);transform-origin:0 0;">Εγκατάσταση λεκάνης α</div>
<div class="t" id="t70" style="top:603.10px;font-size:15px;line-height:18px;color:#222;left:460.30px;transform:scaleX(1.0900);transform-origin:0 0;">ποχωρητηρίου</div>
<div class="t" id="t71" style="top:627.10px;font-size:15px;line-height:18px;color:#222;left:288.80px;transform:scaleX(1.0686);transform-origin:0 0;">χαμηλής πιέσεως από π</div>
<div class="t" id="t72" style="top:627.10px;font-size:15px;line-height:18px;color:#222;left:461.40px;transform:scaleX(1.0900);transform-origin:0 0;">ορσελάνη με το</div>
<div class="t" id="t73" style="top:651.10px;font-size:15px;line-height:18px;color:#222;left:288.80px;transform:scaleX(1.0900);transform-origin:0 0;">σύνολοτων</div>
<div class="a" style="left:589px;top:599px;width:49px;height:29.5px;background:#fff;border:1px solid #767676;border-radius:2.5px;"></div>
<div class="t" id="t74" style="top:605.80px;font-size:15px;line-height:18px;color:#222;left:592.70px;transform:scaleX(0.9988);transform-origin:0 0;">006</div>
<div class="t" id="t75" style="top:603.10px;font-size:15px;line-height:18px;color:#222;left:648.80px;transform:scaleX(1.0080);transform-origin:0 0;">Τεμ.</div>
<div class="t" id="t76" style="top:603.10px;font-size:15px;line-height:18px;color:#222;left:708.70px;transform:scaleX(0.9938);transform-origin:0 0;">ΑΤΗΕ Υδρ. 8321.1</div>
<div class="a" style="left:859.5px;top:599px;width:48.5px;height:29.5px;background:#fff;border:1px solid #767676;border-radius:2.5px;"></div>
<div class="t" id="t77" style="top:605.80px;font-size:15px;line-height:18px;color:#222;right:507.90px;">7</div>
<div class="t" id="t78" style="top:603.10px;font-size:15px;line-height:18px;color:#222;right:383.70px;transform:scaleX(1.0276);transform-origin:100% 0;">268,40 €</div>
<div class="a" style="left:1087px;top:604.5px;width:13px;height:13px;background:#fff;border:1px solid #767676;border-radius:2.5px;"></div>
<div class="t" id="t79" style="top:603.10px;font-size:15px;line-height:18px;color:#222;right:142.80px;transform:scaleX(1.0366);transform-origin:100% 0;">1.878,80 €</div>
<div class="a" style="left:229px;top:674px;width:49px;height:29.5px;background:#fff;border:1px solid #767676;border-radius:2.5px;"></div>
<div class="t" id="t80" style="top:680.80px;font-size:15px;line-height:18px;color:#222;right:1138.80px;">5</div>
<div class="t" id="t81" style="top:678.10px;font-size:15px;line-height:18px;color:#222;left:288.80px;transform:scaleX(1.1054);transform-origin:0 0;">Εγκατάσταση πηγολουτ</div>
<div class="t" id="t82" style="top:678.10px;font-size:15px;line-height:18px;color:#222;left:463.30px;transform:scaleX(1.0900);transform-origin:0 0;">ήρα ντουζιέρας</div>
<div class="t" id="t83" style="top:702.10px;font-size:15px;line-height:18px;color:#222;left:288.80px;transform:scaleX(1.0792);transform-origin:0 0;">από πορσελάνη με το σ</div>
<div class="t" id="t84" style="top:702.10px;font-size:15px;line-height:18px;color:#222;left:458.80px;transform:scaleX(1.0900);transform-origin:0 0;">ύνολο των</div>
<div class="t" id="t85" style="top:726.10px;font-size:15px;line-height:18px;color:#222;left:288.80px;transform:scaleX(1.1259);transform-origin:0 0;">εξαρτημάτων του πλήρ</div>
<div class="t" id="t86" style="top:726.10px;font-size:15px;line-height:18px;color:#222;left:460.30px;transform:scaleX(1.0900);transform-origin:0 0;">ης</div>
<div class="a" style="left:589px;top:674px;width:49px;height:29.5px;background:#fff;border:1px solid #767676;border-radius:2.5px;"></div>
<div class="t" id="t87" style="top:680.80px;font-size:15px;line-height:18px;color:#222;left:592.70px;transform:scaleX(0.9988);transform-origin:0 0;">007</div>
<div class="t" id="t88" style="top:678.10px;font-size:15px;line-height:18px;color:#222;left:648.80px;transform:scaleX(1.0080);transform-origin:0 0;">Τεμ.</div>
<div class="t" id="t89" style="top:678.10px;font-size:15px;line-height:18px;color:#222;left:708.70px;transform:scaleX(0.9938);transform-origin:0 0;">ΑΤΗΕ Υδρ. 8315.1</div>
<div class="a" style="left:859.5px;top:674px;width:48.5px;height:29.5px;background:#fff;border:1px solid #767676;border-radius:2.5px;"></div>
<div class="t" id="t90" style="top:680.80px;font-size:15px;line-height:18px;color:#222;right:507.90px;">2</div>
<div class="t" id="t91" style="top:678.10px;font-size:15px;line-height:18px;color:#222;right:383.70px;transform:scaleX(1.0276);transform-origin:100% 0;">301,20 €</div>
<div class="a" style="left:1087px;top:679.5px;width:13px;height:13px;background:#fff;border:1px solid #767676;border-radius:2.5px;"></div>
<div class="t" id="t92" style="top:678.10px;font-size:15px;line-height:18px;color:#222;right:142.80px;transform:scaleX(1.0515);transform-origin:100% 0;">602,40 €</div>
<div class="a" style="left:229px;top:749px;width:49px;height:29.5px;background:#fff;border:1px solid #767676;border-radius:2.5px;"></div>
<div class="t" id="t93" style="top:755.80px;font-size:15px;line-height:18px;color:#222;right:1138.80px;">6</div>
<div class="t" id="t94" style="top:753.10px;font-size:15px;line-height:18px;color:#222;left:288.80px;transform:scaleX(1.1001);transform-origin:0 0;">Θερμοσίφωνας ηλεκτρικ</div>
<div class="t" id="t95" style="top:753.10px;font-size:15px;line-height:18px;color:#222;left:465.10px;transform:scaleX(1.0900);transform-origin:0 0;">ός</div>
<div class="t" id="t96" style="top:777.10px;font-size:15px;line-height:18px;color:#222;left:288.80px;transform:scaleX(1.0900);transform-origin:0 0;">Χωρητικότητας 80 l Ισχύ</div>
<div class="t" id="t97" style="top:777.10px;font-size:15px;line-height:18px;color:#222;left:469.60px;transform:scaleX(1.0900);transform-origin:0 0;">ος 4000 W</div>
<div class="a" style="left:589px;top:749px;width:49px;height:29.5px;background:#fff;border:1px solid #767676;border-radius:2.5px;"></div>
<div class="t" id="t98" style="top:755.80px;font-size:15px;line-height:18px;color:#222;left:592.70px;transform:scaleX(0.9988);transform-origin:0 0;">008</div>
<div class="t" id="t99" style="top:753.10px;font-size:15px;line-height:18px;color:#222;left:648.80px;transform:scaleX(1.0080);transform-origin:0 0;">Τεμ.</div>
<div class="t" id="t100" style="top:753.10px;font-size:15px;line-height:18px;color:#222;left:708.70px;transform:scaleX(0.9938);transform-origin:0 0;">ΑΤΗΕ Υδρ. 8256.6</div>
<div class="a" style="left:859.5px;top:749px;width:48.5px;height:29.5px;background:#fff;border:1px solid #767676;border-radius:2.5px;"></div>
<div class="t" id="t101" style="top:755.80px;font-size:15px;line-height:18px;color:#222;right:507.90px;">4</div>
<div class="t" id="t102" style="top:753.10px;font-size:15px;line-height:18px;color:#222;right:383.70px;transform:scaleX(1.0276);transform-origin:100% 0;">254,60 €</div>
<div class="a" style="left:1087px;top:754.5px;width:13px;height:13px;background:#fff;border:1px solid #767676;border-radius:2.5px;"></div>
<div class="t" id="t103" style="top:753.10px;font-size:15px;line-height:18px;color:#222;right:142.80px;transform:scaleX(1.0366);transform-origin:100% 0;">1.018,40 €</div>
<div class="a" style="left:1266px;top:232px;width:17px;height:552px;background:#f1f1f1;"></div>
<div class="a" style="left:1268.5px;top:249px;width:12.3px;height:520px;background:#c1c1c1;"></div>
<svg style="left:1266px;top:232px" width="17" height="17"><path d="M4.5 11 L8.5 6.5 L12.5 11 Z" fill="#a3a3a3"/></svg>
<div class="a" style="left:223px;top:784.7px;width:1060px;height:17px;background:#f1f1f1;"></div>
<div class="a" style="left:240px;top:787.3px;width:1010px;height:12px;background:#c1c1c1;"></div>
<svg style="left:223px;top:784.7px" width="17" height="17"><path d="M10.6 4.6 L6.3 8.6 L10.6 12.6 Z" fill="#a3a3a3"/></svg>
</div>
<div class="layer" id="Lw2" style="clip-path:inset(138px 0 45.2px 0)">
<div class="a" style="left:466px;top:379px;width:900px;height:469px;background:#fff;box-shadow:-1px 4px 13px rgba(0,0,0,0.5);"></div>
<div class="a" style="left:466px;top:379px;width:900px;height:29.5px;background:#333;"></div>
<div class="t" id="t104" style="top:384.70px;font-size:15px;line-height:18px;color:#fff;left:475.90px;transform:scaleX(1.0872);transform-origin:0 0;">Τιμές υλικών έργου</div>
<svg style="left:0;top:0" width="1412" height="894" viewBox="0 0 1412 894"><g stroke="#fff" stroke-width="1.3" fill="none"><path d="M1260.5 395.4 H1271.5"/><rect x="1298.5" y="388.5" width="11.5" height="11.5"/><path d="M1338.5 388.5 L1349.5 399.5 M1349.5 388.5 L1338.5 399.5"/></g></svg>
<div class="t" id="t105" style="top:422.19px;font-size:31.2px;line-height:37px;color:#1c1c1c;left:616.00px;width:600px;text-align:center;transform:scaleX(1.0468);transform-origin:50% 0;-webkit-text-stroke:0.85px #1c1c1c;">Τιμές Υλικών/Εργ/Μηχ. Έργου</div>
<div class="t" id="t106" style="top:468.60px;font-size:15px;line-height:18px;color:#2a2a2a;left:530.90px;transform:scaleX(1.0814);transform-origin:0 0;">Αναζήτηση σε:</div>
<svg style="left:679px;top:469.3px" width="15" height="15"><circle cx="7.4" cy="7.2" r="5.9" fill="#fff" stroke="#0d6efd" stroke-width="1.3"/><circle cx="7.4" cy="7.2" r="3.8" fill="#0d6efd"/></svg>
<div class="t" id="t107" style="top:468.60px;font-size:15px;line-height:18px;color:#2a2a2a;left:698.30px;transform:scaleX(1.0870);transform-origin:0 0;">Κωδικός</div>
<svg style="left:773px;top:469.2px" width="15" height="15"><circle cx="7.3" cy="7.2" r="5.9" fill="#fff" stroke="#6e6e6e" stroke-width="1.15"/></svg>
<div class="t" id="t108" style="top:468.60px;font-size:15px;line-height:18px;color:#2a2a2a;left:793.20px;transform:scaleX(1.0988);transform-origin:0 0;">Περιγραφή</div>
<div class="t" id="t109" style="top:506.80px;font-size:15px;line-height:18px;color:#2a2a2a;left:530.90px;transform:scaleX(1.0900);transform-origin:0 0;">Κείμενο Αναζήτησης</div>
<div class="a" style="left:708px;top:503px;width:182px;height:29.5px;background:#fff;border:1px solid #767676;border-radius:2.5px;"></div>
<div class="a" style="left:979px;top:465px;width:129px;height:38px;background:#4a83b8;border-radius:4px;"></div>
<div class="t" id="t110" style="top:474.80px;font-size:15px;line-height:18px;color:#fff;left:743.50px;width:600px;text-align:center;transform:scaleX(1.0645);transform-origin:50% 0;">Προσαύξηση...</div>
<div class="a" style="left:1135px;top:465px;width:76px;height:38px;background:#fff;border:1px solid #4a83b8;border-radius:4px;"></div>
<div class="t" id="t111" style="top:474.80px;font-size:15px;line-height:18px;color:#4a83b8;left:873.00px;width:600px;text-align:center;transform:scaleX(0.9751);transform-origin:50% 0;">ΑΚΥΡΟ</div>
<div class="a" style="left:1216px;top:465px;width:71px;height:38px;background:#4a83b8;border-radius:4px;"></div>
<div class="t" id="t112" style="top:474.80px;font-size:15px;line-height:18px;color:#fff;left:963.50px;width:600px;text-align:center;transform:scaleX(1.0329);transform-origin:50% 0;">OK</div>
<svg style="left:0;top:0" width="1412" height="894" viewBox="0 0 1412 894"><g transform="translate(1231.3,477.1) scale(1.12)"><path d="M1.5 0 H9.6 L13.3 3.7 V11 Q13.3 12.5 11.8 12.5 H1.5 Q0 12.5 0 11 V1.5 Q0 0 1.5 0 Z" fill="#fff"/><rect x="1.9" y="1.8" width="6.8" height="3.1" fill="#4a83b8" rx="0.4"/><circle cx="6.6" cy="8.5" r="1.9" fill="#4a83b8"/></g></svg>
<div class="t" id="t113" style="top:537.00px;font-size:15px;line-height:18px;font-weight:700;color:#111;left:943.50px;transform:scaleX(1.0761);transform-origin:0 0;">Τιμές</div>
<div class="t" id="t114" style="top:537.00px;font-size:15px;line-height:18px;font-weight:700;color:#111;left:1105.30px;transform:scaleX(1.1015);transform-origin:0 0;">Τιμαριθμική</div>
<div class="a" style="left:531px;top:557px;width:770px;height:264.5px;overflow:hidden">
<div class="a" style="left:-531px;top:-557px;width:1412px;height:894px">
<div class="a" style="left:531px;top:557px;width:753px;height:1px;background:#000;"></div>
<div class="a" style="left:531px;top:557px;width:1.3px;height:270px;background:#000;"></div>
<div class="a" style="left:1282.7px;top:557px;width:1.3px;height:270px;background:#000;"></div>
<div class="t" id="t115" style="top:557.60px;font-size:15px;line-height:18px;font-weight:700;color:#111;left:532.10px;transform:scaleX(1.0809);transform-origin:0 0;">ΠΡΣ 2Κ4 Η4.12.9</div>
<div class="t" id="t116" style="top:557.60px;font-size:15px;line-height:18px;color:#2a2a2a;left:832.10px;transform:scaleX(0.9801);transform-origin:0 0;">Τεμ.</div>
<div class="a" style="left:906.5px;top:559.3px;width:108.5px;height:14.5px;background:#fff;border:1px solid #767676;border-radius:2px;"></div>
<div class="t" id="t117" style="top:559.10px;font-size:13px;line-height:16px;color:#111;right:399.30px;transform:scaleX(1.0300);transform-origin:100% 0;">21.87</div>
<div class="t" id="t118" style="top:573.70px;font-size:15px;line-height:18px;color:#2a2a2a;left:532.10px;transform:scaleX(1.1001);transform-origin:0 0;">Μεταλλικά εξαρτήματα - Συλλέκτες από σιδηροσωλήνες</div>
<div class="t" id="t119" style="top:589.70px;font-size:15px;line-height:18px;color:#2a2a2a;left:532.10px;transform:scaleX(1.0892);transform-origin:0 0;">χωρίς ραφή 2 1/2&quot;, 2 εξόδ.</div>
<div class="t" id="t120" style="top:573.70px;font-size:15px;line-height:18px;color:#2a2a2a;left:982.50px;transform:scaleX(1.0935);transform-origin:0 0;">Τιμολόγιο Δημοσίου</div>
<div class="t" id="t121" style="top:573.70px;font-size:15px;line-height:18px;color:#2a2a2a;left:1169.60px;transform:scaleX(1.0817);transform-origin:0 0;">2004-09-30</div>
<div class="a" style="left:531px;top:606px;width:753px;height:2px;background:#000;"></div>
<div class="t" id="t122" style="top:607.60px;font-size:15px;line-height:18px;font-weight:700;color:#111;left:532.10px;transform:scaleX(1.0718);transform-origin:0 0;">ΠΡΣ 2Κ4 Η6.1.8.8</div>
<div class="t" id="t123" style="top:607.60px;font-size:15px;line-height:18px;color:#2a2a2a;left:832.10px;transform:scaleX(0.9801);transform-origin:0 0;">Τεμ.</div>
<div class="a" style="left:906.5px;top:609.3px;width:108.5px;height:14.5px;background:#fff;border:1px solid #767676;border-radius:2px;"></div>
<div class="t" id="t124" style="top:609.10px;font-size:13px;line-height:16px;color:#111;right:399.30px;transform:scaleX(1.0300);transform-origin:100% 0;">292.82</div>
<div class="t" id="t125" style="top:623.70px;font-size:15px;line-height:18px;color:#2a2a2a;left:532.10px;transform:scaleX(1.0814);transform-origin:0 0;">Υδραυλικές βαλβίδες μονού θαλάμου - Υδραυλικές βαλβίδες</div>
<div class="t" id="t126" style="top:639.70px;font-size:15px;line-height:18px;color:#2a2a2a;left:532.10px;transform:scaleX(1.0892);transform-origin:0 0;">αντεπιστροφής, ελαστικής έμφραξης, χυτοσιδηρές, μονού...</div>
<div class="t" id="t127" style="top:623.70px;font-size:15px;line-height:18px;color:#2a2a2a;left:982.50px;transform:scaleX(1.0935);transform-origin:0 0;">Τιμολόγιο Δημοσίου</div>
<div class="t" id="t128" style="top:623.70px;font-size:15px;line-height:18px;color:#2a2a2a;left:1169.60px;transform:scaleX(1.0817);transform-origin:0 0;">2004-09-30</div>
<div class="a" style="left:531px;top:656px;width:753px;height:2px;background:#000;"></div>
<div class="t" id="t129" style="top:657.60px;font-size:15px;line-height:18px;font-weight:700;color:#111;left:532.10px;transform:scaleX(1.0637);transform-origin:0 0;">ΠΡΣ 2Κ4 Η8.3.1.1</div>
<div class="t" id="t130" style="top:657.60px;font-size:15px;line-height:18px;color:#2a2a2a;left:832.10px;transform:scaleX(0.9801);transform-origin:0 0;">Τεμ.</div>
<div class="a" style="left:906.5px;top:659.3px;width:108.5px;height:14.5px;background:#fff;border:1px solid #767676;border-radius:2px;"></div>
<div class="t" id="t131" style="top:659.10px;font-size:13px;line-height:16px;color:#111;right:399.30px;transform:scaleX(1.0300);transform-origin:100% 0;">6.46</div>
<div class="t" id="t132" style="top:673.70px;font-size:15px;line-height:18px;color:#2a2a2a;left:532.10px;transform:scaleX(1.0926);transform-origin:0 0;">Εκτοξευτήρας αυτοανυψούμενος, στατικός. Απόσταση</div>
<div class="t" id="t133" style="top:689.70px;font-size:15px;line-height:18px;color:#2a2a2a;left:532.10px;transform:scaleX(1.1077);transform-origin:0 0;">σταλακτών 5-7 cm</div>
<div class="t" id="t134" style="top:673.70px;font-size:15px;line-height:18px;color:#2a2a2a;left:982.50px;transform:scaleX(1.0935);transform-origin:0 0;">Τιμολόγιο Δημοσίου</div>
<div class="t" id="t135" style="top:673.70px;font-size:15px;line-height:18px;color:#2a2a2a;left:1169.60px;transform:scaleX(1.0817);transform-origin:0 0;">2004-09-30</div>
<div class="a" style="left:531px;top:706px;width:753px;height:2px;background:#000;"></div>
<div class="t" id="t136" style="top:707.60px;font-size:15px;line-height:18px;font-weight:700;color:#111;left:532.10px;transform:scaleX(1.0236);transform-origin:0 0;">ΥΛΙΚΟ ΑΤΟΕ 000495</div>
<div class="t" id="t137" style="top:707.60px;font-size:15px;line-height:18px;color:#2a2a2a;left:832.10px;transform:scaleX(1.0186);transform-origin:0 0;">Kg</div>
<div class="a" style="left:906.5px;top:709.3px;width:108.5px;height:14.5px;background:#fff;border:1px solid #767676;border-radius:2px;"></div>
<div class="t" id="t138" style="top:709.10px;font-size:13px;line-height:16px;color:#e00;right:399.30px;transform:scaleX(1.0300);transform-origin:100% 0;">0</div>
<div class="t" id="t139" style="top:723.70px;font-size:15px;line-height:18px;color:#2a2a2a;left:532.10px;transform:scaleX(1.0981);transform-origin:0 0;">Μολυβδόκολλα.</div>
<div class="t" id="t140" style="top:707.60px;font-size:15px;line-height:18px;color:#2a2a2a;left:1019.80px;transform:scaleX(1.0532);transform-origin:0 0;">Δ ΤΡΙΜΗΝΟ € 2008 Δημοσίου</div>
<div class="a" style="left:531px;top:756px;width:753px;height:2px;background:#000;"></div>
<div class="t" id="t141" style="top:757.60px;font-size:15px;line-height:18px;font-weight:700;color:#111;left:532.10px;transform:scaleX(1.0788);transform-origin:0 0;">ΥΛΙΚΟ ΗΛΜ 000566.001</div>
<div class="t" id="t142" style="top:757.60px;font-size:15px;line-height:18px;color:#2a2a2a;left:832.10px;transform:scaleX(1.1200);transform-origin:0 0;">m</div>
<div class="a" style="left:906.5px;top:759.3px;width:108.5px;height:14.5px;background:#fff;border:1px solid #767676;border-radius:2px;"></div>
<div class="t" id="t143" style="top:759.10px;font-size:13px;line-height:16px;color:#111;right:399.30px;transform:scaleX(1.0300);transform-origin:100% 0;">2.15</div>
<div class="t" id="t144" style="top:773.70px;font-size:15px;line-height:18px;color:#2a2a2a;left:532.10px;transform:scaleX(1.0734);transform-origin:0 0;">Σιδηροσωλήνας γαλβανισμένος μετά ραφής ISO MEDIUM</div>
<div class="t" id="t145" style="top:789.70px;font-size:15px;line-height:18px;color:#2a2a2a;left:532.10px;transform:scaleX(1.0827);transform-origin:0 0;">βαρύς (πράσινη ετικέτα) διαμ 1 /2 ins πάχους 2,65 mm</div>
<div class="t" id="t146" style="top:757.60px;font-size:15px;line-height:18px;color:#2a2a2a;left:1019.80px;transform:scaleX(1.0532);transform-origin:0 0;">Δ ΤΡΙΜΗΝΟ € 2008 Δημοσίου</div>
<div class="a" style="left:531px;top:806px;width:753px;height:2px;background:#000;"></div>
<div class="t" id="t147" style="top:807.60px;font-size:15px;line-height:18px;font-weight:700;color:#111;left:532.10px;transform:scaleX(1.0813);transform-origin:0 0;">ΥΛΙΚΟ ΗΛΜ 000617.002.001</div>
<div class="t" id="t148" style="top:807.60px;font-size:15px;line-height:18px;color:#2a2a2a;left:832.10px;transform:scaleX(0.9801);transform-origin:0 0;">Τεμ.</div>
<div class="a" style="left:906.5px;top:809.3px;width:108.5px;height:14.5px;background:#fff;border:1px solid #767676;border-radius:2px;"></div>
<div class="t" id="t149" style="top:809.10px;font-size:13px;line-height:16px;color:#e00;right:399.30px;transform:scaleX(1.0300);transform-origin:100% 0;">0</div>
<div class="t" id="t150" style="top:823.70px;font-size:15px;line-height:18px;color:#2a2a2a;left:532.10px;transform:scaleX(1.0850);transform-origin:0 0;">Χαλυβδοσωλήνας</div>
<div class="t" id="t151" style="top:807.60px;font-size:15px;line-height:18px;color:#2a2a2a;left:1019.80px;transform:scaleX(1.0532);transform-origin:0 0;">Δ ΤΡΙΜΗΝΟ € 2008 Δημοσίου</div>
</div></div>
<div class="a" style="left:1285px;top:557px;width:16px;height:264.5px;background:#f1f1f1;"></div>
<div class="a" style="left:1287px;top:573.5px;width:12px;height:44px;background:#c1c1c1;"></div>
<svg style="left:1285px;top:557px" width="16" height="17"><path d="M4.5 10.5 L8 6.5 L11.5 10.5 Z" fill="#a3a3a3"/></svg>
<svg style="left:1285px;top:804px" width="16" height="17"><path d="M4.5 6.5 L8 10.5 L11.5 6.5 Z" fill="#505050"/></svg>
</div>
</body></html>
